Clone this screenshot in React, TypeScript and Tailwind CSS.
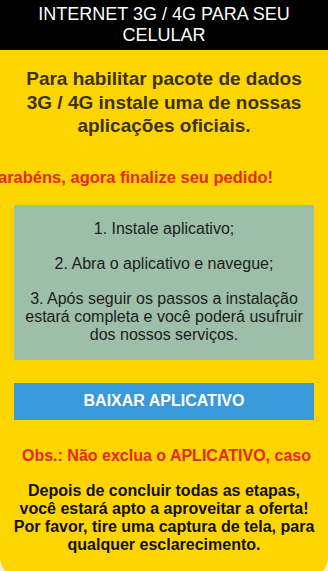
import React from "react";

export default function App() {
  const font = { fontFamily: '"Liberation Sans", Arial, sans-serif' };
  return (
    <div className="w-[328px] min-h-[571px] bg-[#f0f0f0] overflow-hidden" style={font}>
      <div className="bg-[#fed500] rounded-b-[22px] pb-[24px]">
        <div className="bg-black h-[50px] pt-[4px] text-center text-white text-[18px] leading-[21px]">
          INTERNET 3G / 4G PARA SEU
          <br />
          CELULAR
        </div>
        <h1 className="mt-[17px] px-[12px] text-center font-bold text-[19px] leading-[23.5px] text-[#3a3210]">
          Para habilitar pacote de dados 3G / 4G instale uma de nossas aplicações oficiais.
        </h1>
        <div className="mt-[30px] overflow-hidden whitespace-nowrap">
          <div className="ml-[-13px] font-bold text-[16.5px] leading-[18px] text-[#e8281c]">
            Parabéns, agora finalize seu pedido!
          </div>
        </div>
        <div className="mt-[19px] mx-[14px] bg-[#9dbfa9] pt-[15px] pb-[16px] px-[4px] text-center text-[16px] leading-[18px] text-[#1c1c1c] flex flex-col gap-[17px]">
          <p>1. Instale aplicativo;</p>
          <p>2. Abra o aplicativo e navegue;</p>
          <p>3. Após seguir os passos a instalação estará completa e você poderá usufruir dos nossos serviços.</p>
        </div>
        <div className="mt-[23px] mx-[14px] h-[37px] bg-[#3a99d9] flex items-center justify-center text-white font-bold text-[16px]">
          BAIXAR APLICATIVO
        </div>
        <div className="mt-[27px] overflow-hidden whitespace-nowrap pl-[22px] font-bold text-[16px] leading-[18px] text-[#e8281c]">
          Obs.: Não exclua o APLICATIVO, caso
        </div>
        <p className="mt-[17px] px-[2px] text-center font-bold text-[16px] leading-[18.3px] text-[#111]">
          Depois de concluir todas as etapas,
          <br />
          você estará apto a aproveitar a oferta!
          <br />
          Por favor, tire uma captura de tela, para
          <br />
          qualquer esclarecimento.
        </p>
      </div>
    </div>
  );
}
